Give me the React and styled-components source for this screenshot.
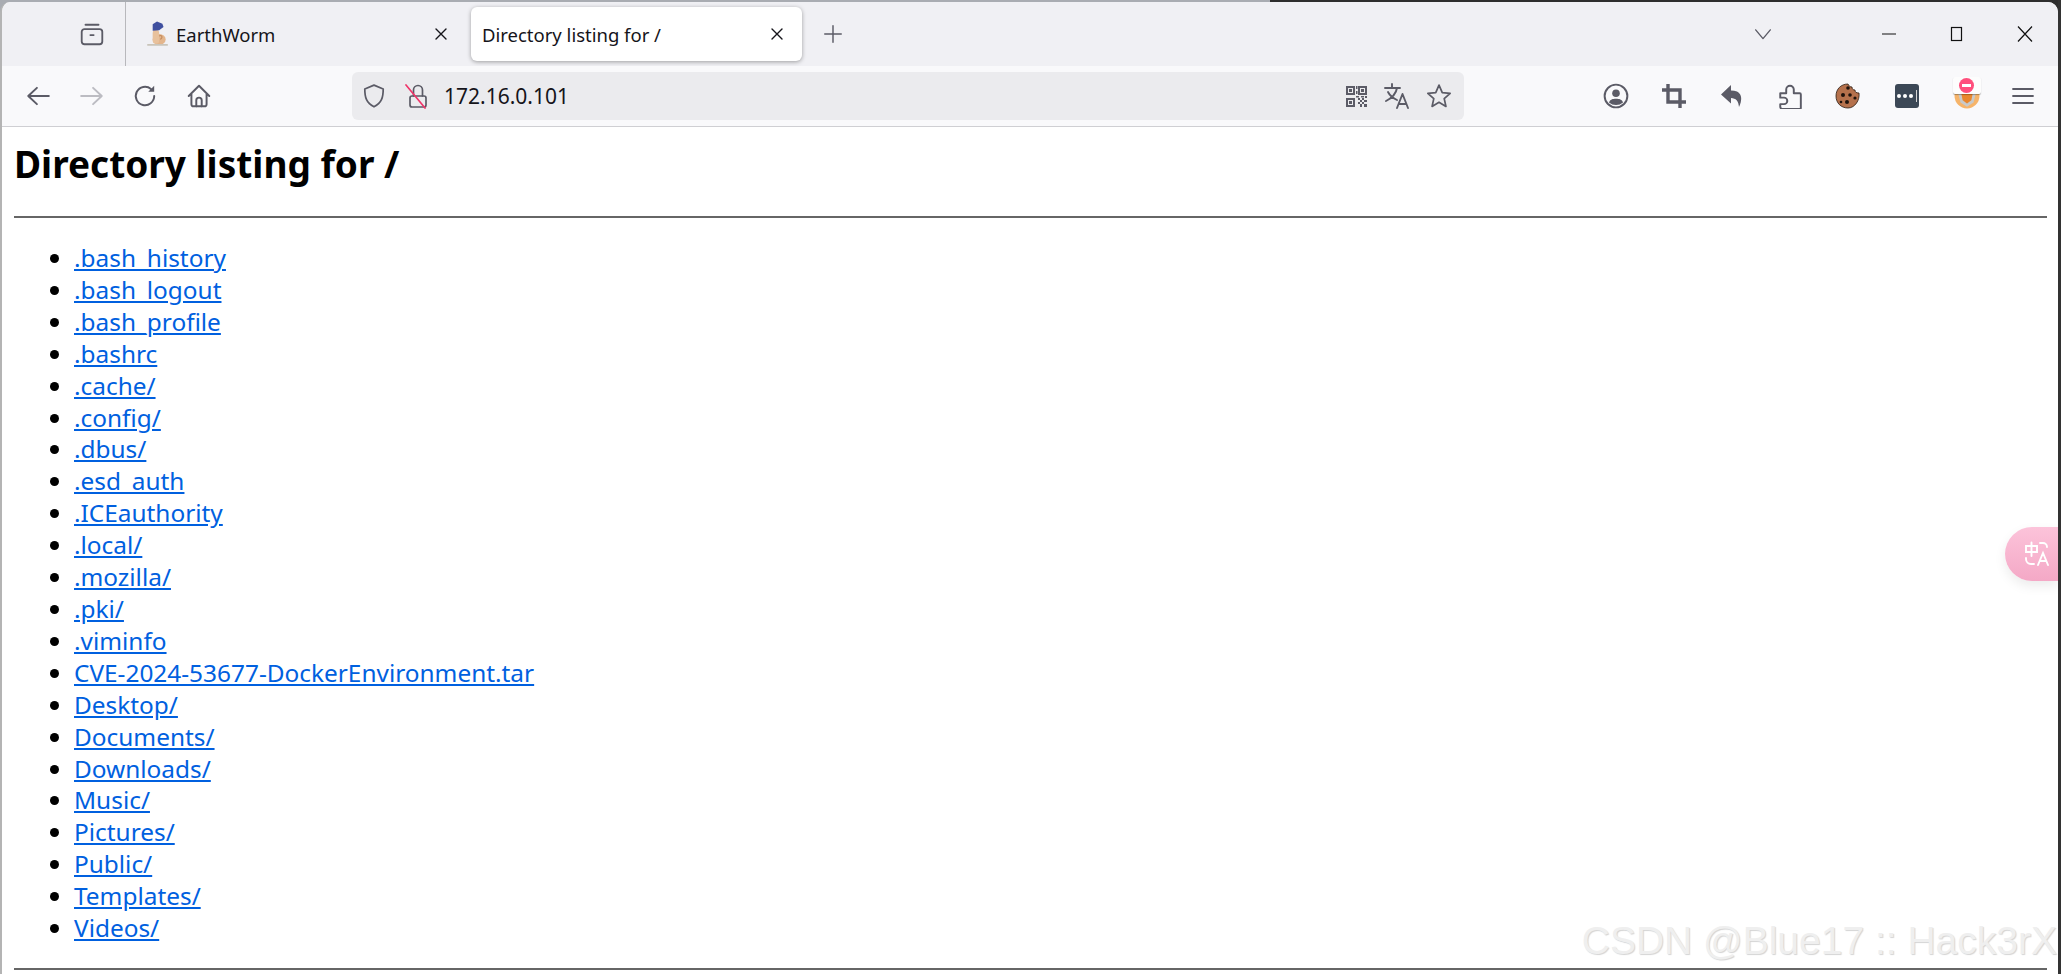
import styled, { createGlobalStyle } from 'styled-components'

const files = [
	'.bash_history', '.bash_logout', '.bash_profile', '.bashrc', '.cache/', '.config/', '.dbus/', '.esd_auth',
	'.ICEauthority', '.local/', '.mozilla/', '.pki/', '.viminfo', 'CVE-2024-53677-DockerEnvironment.tar',
	'Desktop/', 'Documents/', 'Downloads/', 'Music/', 'Pictures/', 'Public/', 'Templates/', 'Videos/',
]

const Stroke = ({ size = 24, color = '#5b5b66', width = 1.7, children }) => (
	<svg width={size} height={size} viewBox='0 0 24 24' fill='none' stroke={color} strokeWidth={width} strokeLinecap='round' strokeLinejoin='round'>
		{children}
	</svg>
)

export default function App() {
	return (
		<Screen>
			<GlobalStyle />
			<TopStrip />
			<Window>
				<TabBar>
					<TabsButton>
						<Stroke size={26}>
							<path d='M6 3.5h12' />
							<rect x='2.5' y='7.5' width='19' height='14' rx='2.5' />
							<path d='M10.5 13h3' />
						</Stroke>
					</TabsButton>
					<Tab>
						<svg width='26' height='26' viewBox='0 0 24 24'>
							<ellipse cx='14' cy='17' rx='6' ry='5' fill='#e3b58c' />
							<rect x='8' y='8' width='6' height='13' rx='3' fill='#e8c19c' />
							<path d='M15 17c3-2 1-5-1-3' fill='none' stroke='#c48c5e' strokeWidth='1' />
							<path d='M8 3l4-2.500 5 2 1 3-4 3-6 .5z' fill='#3f4f9f' />
							<path d='M3 22h19' stroke='#c9c4ba' strokeWidth='1.500' />
						</svg>
						<TabLabel>EarthWorm</TabLabel>
						<TabClose />
					</Tab>
					<Tab $active>
						<TabLabel>Directory listing for /</TabLabel>
						<TabClose />
					</Tab>
					<PlusButton>
						<Stroke size={22} width={1.6}>
							<path d='M12 3v18M3 12h18' />
						</Stroke>
					</PlusButton>
					<Spacer />
					<ListTabs>
						<Stroke size={22} width={1.5}>
							<path d='M4 7.5l8 9.5 8-9.5' />
						</Stroke>
					</ListTabs>
					<Controls>
						<Control><svg width='16' height='16' viewBox='0 0 16 16'><path d='M1 8h14' stroke='#111' strokeWidth='1.2' /></svg></Control>
						<Control><svg width='16' height='16' viewBox='0 0 16 16'><rect x='2.5' y='1.5' width='10' height='13' fill='none' stroke='#111' strokeWidth='1.2' /></svg></Control>
						<Control><svg width='18' height='18' viewBox='0 0 18 18'><path d='M2 1.5l14 15M16 1.5l-14 15' stroke='#111' strokeWidth='1.2' /></svg></Control>
					</Controls>
				</TabBar>
				<Toolbar>
					<NavGroup>
						<NavButton>
							<Stroke size={26} width={1.8}><path d='M22 12H3M11 4.5L3 12l8 7.5' /></Stroke>
						</NavButton>
						<NavButton>
							<Stroke size={26} width={1.8} color='#bcbcc2'><path d='M2 12h19M13 4.5l8 7.5-8 7.5' /></Stroke>
						</NavButton>
						<NavButton>
							<Stroke size={26} width={1.8}>
								<path d='M20.5 12a8.5 8.5 0 1 1-3-6.5' />
								<path d='M20.5 2.5v5.5h-5.5z' fill='#5b5b66' stroke='none' />
							</Stroke>
						</NavButton>
						<NavButton>
							<Stroke size={26} width={1.8}>
								<path d='M2.5 12L12 2.5 21.5 12M5 10v9.5a2 2 0 0 0 2 2h10a2 2 0 0 0 2-2V10' />
								<path d='M9.5 21.5V16a2.5 2.5 0 0 1 5 0v5.5' />
							</Stroke>
						</NavButton>
					</NavGroup>
					<UrlBar>
						<UrlIcon>
							<Stroke size={26} width={1.6}>
								<path d='M12 2L3.5 5.5c0 8 1.5 13 8.5 16.5 7-3.500 8.500-8.500 8.500-16.500z' />
							</Stroke>
						</UrlIcon>
						<UrlIcon>
							<svg width='24' height='26' viewBox='0 0 24 26' fill='none' strokeLinecap='round'>
								<rect x='5' y='13' width='16' height='11' rx='2' stroke='#5b5b66' strokeWidth='1.7' />
								<path d='M8.500 13V7a4.500 4.500 0 0 1 9 0v6' stroke='#5b5b66' strokeWidth='1.7' />
								<path d='M1 2l19 23' stroke='#f0356a' strokeWidth='1.7' />
							</svg>
						</UrlIcon>
						<UrlText>172.16.0.101</UrlText>
						<Spacer />
						<UrlActions>
							<svg width='23' height='23' viewBox='0 0 23 23' fill='#5b5b66'>
								<path fillRule='evenodd' d='M1 1h9v9H1zM3 3v5h5V3zM13 1h9v9h-9zM15 3v5h5V3zM1 13h9v9H1zM3 15v5h5v-5z' />
								<rect x='4' y='4' width='3' height='3' />
								<rect x='16' y='4' width='3' height='3' />
								<rect x='4' y='16' width='3' height='3' />
								<path d='M11 1h1.500v3H11zM11 6h1.500v3H11zM11 11h3v1.500h-3zM16 11h3v1.500h-3zM20 11h2v2h-2zM13 13h2v2h-2zM17 13h2v2h-2zM15 15h2v2h-2zM19 15h3v2h-3zM13 17h2v2h-2zM17 17h2v2h-2zM15 19h2v3h-2zM19 19h3v3h-3z' />
							</svg>
							<svg width='28' height='28' viewBox='0 0 28 28' fill='none' stroke='#5b5b66' strokeWidth='1.9' strokeLinecap='round' strokeLinejoin='round'>
								<path d='M2 6h15M9 2v4M14 6c-1 6-5 10-11 13M5 10c2 4 5 6 9 8M14 26l5.500-14L25 26M16 22h7' />
							</svg>
							<Stroke size={26} width={1.6}>
								<path d='M12 2l3 6.800 7.300.7-5.500 4.900 1.600 7.200L12 17.800l-6.400 3.800 1.600-7.200L1.700 9.500 9 8.800z' />
							</Stroke>
						</UrlActions>
					</UrlBar>
					<Spacer />
					<Extensions>
						<Extension>
							<Stroke size={26} width={1.8}>
								<circle cx='12' cy='12' r='10.500' />
								<circle cx='12' cy='9.500' r='3.500' fill='#5b5b66' stroke='none' />
								<path d='M5.500 18c1-3 3.500-3.500 6.500-3.500s5.500.5 6.500 3.500a10 10 0 0 1-13 0z' fill='#5b5b66' stroke='none' />
							</Stroke>
						</Extension>
						<Extension>
							<svg width='24' height='24' viewBox='0 0 24 24' fill='none' stroke='#5b5b66' strokeWidth='3.400'>
								<path d='M6 0v18h18M0 6h18v18' />
							</svg>
						</Extension>
						<Extension>
							<svg width='24' height='26' viewBox='0 0 24 26' fill='#5b5b66'>
								<path d='M11 2L1 11.500 11 20.500v-5.500c5 .2 7.500 3 8 9 3-6 3.500-13-2-15.500-1.800-.7-3.800-1-6-1z' />
							</svg>
						</Extension>
						<Extension>
							<Stroke size={26} width={1.8}>
								<path d='M3 9.500h5.500V6a3.500 3.500 0 0 1 7 0v3.500H21a1 1 0 0 1 1 1V23a1 1 0 0 1-1 1H5a2 2 0 0 1-2-2v-2.500h3.500a3 3 0 0 0 0-6H3z' />
							</Stroke>
						</Extension>
						<Extension>
							<svg width='26' height='26' viewBox='0 0 26 26'>
								<path d='M13 1c1 2 2 3 4 3 0 2 1 3 3 3 0 2 1 3 4 3 1 7-4 15-11 15C6 25 1 20 1 13S6 1 13 1z' fill='#b5714c' stroke='#2a1c12' strokeWidth='.8' />
								<circle cx='13' cy='5' r='1.800' fill='#1d120c' />
								<circle cx='8' cy='12' r='2' fill='#1d120c' />
								<circle cx='15' cy='12' r='1.800' fill='#1d120c' />
								<circle cx='20' cy='15' r='1.600' fill='#1d120c' />
								<circle cx='12' cy='19' r='2' fill='#1d120c' />
								<circle cx='6' cy='19' r='1.300' fill='#1d120c' />
							</svg>
						</Extension>
						<PassBadge>
							<i /><i /><i /><b />
						</PassBadge>
						<FoxBadge>
							<svg width='26' height='26' viewBox='0 0 24 24'>
								<circle cx='12' cy='12' r='11.500' fill='#f6b46a' />
								<path d='M3 6h18l-3 12-6 4-6-4z' fill='#c9c9c9' />
								<path d='M6 6h12l-2 10-4 3-4-3z' fill='#e9862d' />
							</svg>
							<BlockTag><BlockDot /></BlockTag>
						</FoxBadge>
						<Extension>
							<Stroke size={24} width={1.8}>
								<path d='M2 5h20M2 12h20M2 19h20' />
							</Stroke>
						</Extension>
					</Extensions>
				</Toolbar>
				<Page>
					<Heading>Directory listing for /</Heading>
					<Rule />
					<FileList>
						{files.map((name) => (
							<li key={name}>
								<FileLink href={`#${name}`}>{name}</FileLink>
							</li>
						))}
					</FileList>
					<Rule />
					<TranslateFab>
						<svg width='26' height='26' viewBox='0 0 26 26' fill='none' stroke='#fff' strokeWidth='1.900' strokeLinecap='round'>
							<path d='M2 5h11v6H2zM7.500 1.500V15M16 2h3a4 4 0 0 1 4 4M2 17v1a5 5 0 0 0 5 5h3M14 24l5-12 5 12M16 20h6' />
						</svg>
					</TranslateFab>
					<Watermark>CSDN @Blue17 :: Hack3rX</Watermark>
				</Page>
			</Window>
			<RightEdge />
		</Screen>
	)
}

function TabClose() {
	return (
		<CloseMark>
			<svg width='14' height='14' viewBox='0 0 14 14'>
				<path d='M2 2l10 10M12 2L2 12' stroke='#15141a' strokeWidth='1.400' strokeLinecap='round' />
			</svg>
		</CloseMark>
	)
}

const GlobalStyle = createGlobalStyle`
	html, body {
		margin: 0;
		padding: 0;
		height: 100%;
		overflow: hidden;
		background: #333;
	}
`

const Screen = styled.div`
	position: relative;
	display: flex;
	flex-direction: column;
	width: 2061px;
	height: 974px;
	overflow: hidden;
	background: linear-gradient(90deg, #a9acb2 0, #a9acb2 1270px, #2e2e2e 1270px);
`

const TopStrip = styled.div`
	height: 2px;
	flex: none;
`

const Window = styled.div`
	flex: 1;
	min-height: 0;
	margin-right: 3px;
	display: flex;
	flex-direction: column;
	background: #fff;
	border-left: 2px solid #b4b4b4;
	border-radius: 10px 10px 0 0;
	overflow: hidden;
`

const RightEdge = styled.div`
	position: absolute;
	top: 0;
	right: 0;
	bottom: 0;
	width: 3px;
	background: #333;
`

const TabBar = styled.div`
	height: 64px;
	flex: none;
	display: flex;
	align-items: center;
	background: #f0f0f4;
	font-family: 'Noto Sans', 'Open Sans', sans-serif;
`

const TabsButton = styled.div`
	width: 124px;
	height: 100%;
	display: flex;
	align-items: center;
	justify-content: flex-end;
	padding-right: 20px;
	box-sizing: border-box;
	border-right: 1px solid #b8b8bc;
`

const Tab = styled.div`
	width: ${(p) => (p.$active ? '331px' : '341px')};
	height: 54px;
	margin-right: 4px;
	padding: 0 ${(p) => (p.$active ? '18px' : '19px')} 0 ${(p) => (p.$active ? '11px' : '18px')};
	box-sizing: border-box;
	display: flex;
	align-items: center;
	gap: 6px;
	border-radius: 6px;
	color: #15141a;
	background: ${(p) => (p.$active ? '#fff' : 'transparent')};
	box-shadow: ${(p) => (p.$active ? '0 1px 4px rgba(0, 0, 0, 0.35)' : 'none')};
`

const TabLabel = styled.span`
	flex: 1;
	font-size: 18.5px;
	white-space: nowrap;
`

const CloseMark = styled.span`
	display: flex;
	flex: none;
`

const PlusButton = styled.div`
	margin-left: 16px;
	display: flex;
`

const Spacer = styled.div`
	flex: 1;
`

const ListTabs = styled.div`
	display: flex;
	margin-right: 106px;
`

const Controls = styled.div`
	display: flex;
	align-items: center;
	gap: 50px;
	margin-right: 24px;
`

const Control = styled.div`
	width: 18px;
	display: flex;
	justify-content: center;
`

const Toolbar = styled.div`
	height: 60px;
	flex: none;
	display: flex;
	align-items: center;
	background: #f9f9fb;
	border-bottom: 1px solid #cfcfd3;
	box-sizing: content-box;
	font-family: 'Noto Sans', 'Open Sans', sans-serif;
`

const NavGroup = styled.div`
	width: 350px;
	flex: none;
	display: flex;
	align-items: center;
	gap: 27.5px;
	padding-left: 23px;
	box-sizing: border-box;
`

const NavButton = styled.div`
	display: flex;
`

const UrlBar = styled.div`
	width: 1112px;
	height: 48px;
	flex: none;
	display: flex;
	align-items: center;
	gap: 18px;
	padding: 0 12px 0 9px;
	box-sizing: border-box;
	background: #ebebee;
	border-radius: 6px;
`

const UrlIcon = styled.span`
	display: flex;
`

const UrlText = styled.span`
	font-size: 21px;
	color: #15141a;
	margin-left: -3px;
`

const UrlActions = styled.div`
	display: flex;
	align-items: center;
	gap: 15px;
`

const Extensions = styled.div`
	display: flex;
	align-items: center;
	gap: 32.2px;
	margin-right: 22px;
`

const Extension = styled.div`
	display: flex;
	width: 26px;
	justify-content: center;
`

const PassBadge = styled.div`
	width: 24px;
	height: 24px;
	margin: 0 1px;
	display: flex;
	align-items: center;
	justify-content: center;
	gap: 2px;
	border-radius: 3px;
	background: #3c4856;
	i {
		width: 4px;
		height: 4px;
		border-radius: 50%;
		background: #fff;
	}
	b {
		width: 1px;
		height: 12px;
		margin-left: 1px;
		background: #d6d6d6;
	}
`

const FoxBadge = styled.div`
	position: relative;
	display: flex;
	width: 26px;
	margin-left: 2px;
	margin-right: -2px;
	justify-content: center;
`

const BlockTag = styled.div`
	position: absolute;
	top: -6px;
	left: -1px;
	width: 28px;
	height: 16px;
	padding-top: 1px;
	display: flex;
	justify-content: center;
	background: #fdfdfd;
	border-radius: 2px;
	box-shadow: 0 1px 1px rgba(0, 0, 0, 0.3);
`

const BlockDot = styled.div`
	position: relative;
	width: 15px;
	height: 15px;
	border-radius: 50%;
	background: #ff4f7d;
	&::after {
		content: '';
		position: absolute;
		left: 3px;
		right: 3px;
		top: 6px;
		height: 3px;
		background: #fff;
	}
`

const Page = styled.main`
	position: relative;
	flex: 1;
	min-height: 0;
	padding: 0 11px 0 12px;
	overflow: hidden;
	font-family: 'Noto Sans', 'Open Sans', sans-serif;
	background: #fff;
`

const Heading = styled.h1`
	margin: 13px 0 28px;
	font-size: 37px;
	line-height: 48px;
	font-weight: 700;
	color: #000;
`

const Rule = styled.hr`
	margin: 0;
	height: 2px;
	border: 0;
	background: #666;
`

const FileList = styled.ul`
	margin: 24px 0 24px;
	padding: 0 0 0 60px;
	font-size: 24.4px;
	line-height: 31.9px;
`

const FileLink = styled.a`
	color: #0060df;
	text-decoration: underline;
`

const TranslateFab = styled.div`
	position: absolute;
	top: 400px;
	right: 0;
	width: 53px;
	height: 54px;
	padding-left: 19px;
	box-sizing: border-box;
	display: flex;
	align-items: center;
	border-radius: 27px 0 0 27px;
	background: linear-gradient(180deg, #fcc3da, #f4a8c6);
	box-shadow: 0 5px 12px rgba(0, 0, 0, 0.08);
`

const Watermark = styled.div`
	position: absolute;
	right: 1px;
	bottom: 11px;
	font-family: 'Liberation Sans', sans-serif;
	font-size: 39px;
	line-height: 44px;
	color: #efefef;
	white-space: nowrap;
	text-shadow: 1px 1px 1px #d4d4d4;
`
